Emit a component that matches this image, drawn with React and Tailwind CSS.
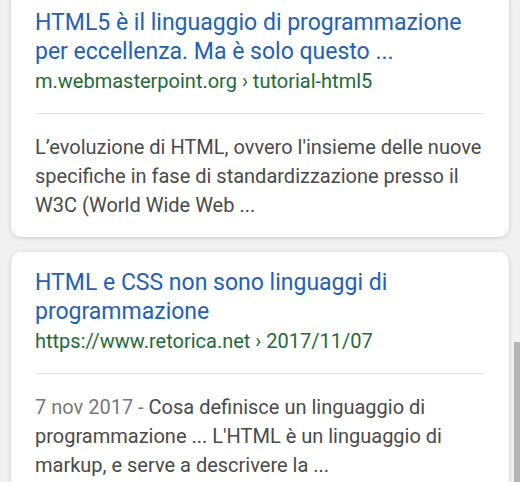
const results = [
  {
    title: "HTML5 è il linguaggio di programmazione per eccellenza. Ma è solo questo ...",
    url: "m.webmasterpoint.org › tutorial-html5",
    snippet: "L’evoluzione di HTML, ovvero l'insieme delle nuove specifiche in fase di standardizzazione presso il W3C (World Wide Web ...",
  },
  {
    title: "HTML e CSS non sono linguaggi di programmazione",
    url: "https://www.retorica.net › 2017/11/07",
    date: "7 nov 2017 - ",
    snippet: "Cosa definisce un linguaggio di programmazione ... L'HTML è un linguaggio di markup, e serve a descrivere la ...",
  },
];

function ResultCard({ result }) {
  return (
    <div className="bg-white rounded-[10px] shadow-[0_1px_4px_rgba(0,0,0,0.16)] px-6 pt-4 pb-[17px]">
      <h3 className="text-[23px] leading-[29px] text-[#2160bd]">{result.title}</h3>
      <div className="text-[20px] leading-[28px] text-[#1e6b34] mt-[1px]">{result.url}</div>
      <div className="h-px bg-[#e3e3e3] mt-[18px]" />
      <p className="text-[20px] leading-[29px] text-[#4a4a4a] mt-[19px]">
        {result.date && <span className="text-[#777777]">{result.date}</span>}
        <span>{result.snippet}</span>
      </p>
    </div>
  );
}

export default function App() {
  return (
    <div className="relative w-[520px] h-[482px] overflow-hidden bg-[#f1f1f1] font-['Roboto',sans-serif]">
      <div className="flex flex-col gap-[15px] pl-[11px] pr-[11px] -mt-[8px]">
        {results.map((r) => (
          <ResultCard key={r.url} result={r} />
        ))}
      </div>
      {/* scrollbar */}
      <div className="absolute right-0 top-[342px] w-[6px] h-[140px] bg-[#b3b3b3]" />
    </div>
  );
}
